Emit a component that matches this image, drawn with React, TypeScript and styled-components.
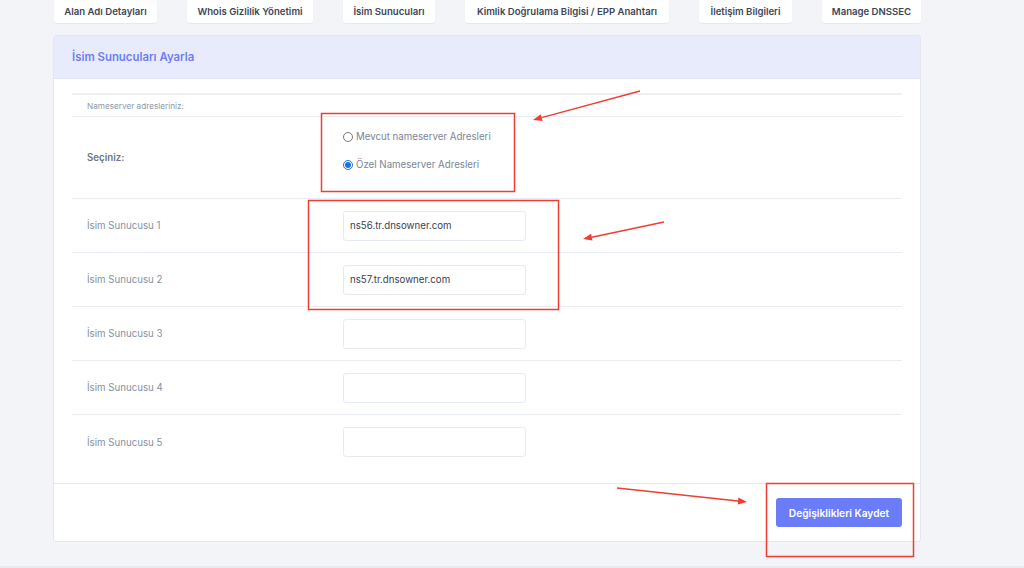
import React from "react";
import styled, { createGlobalStyle } from "styled-components";

const Global = createGlobalStyle`
  html, body { margin: 0; padding: 0; background: #f3f4f8; }
  body { font-family: Inter, "Noto Sans", sans-serif; width: 1024px; height: 568px; overflow: hidden; }
  * { box-sizing: border-box; }
`;

const Page = styled.div`
  position: relative;
  width: 1024px;
  height: 568px;
  padding-left: 53px;
  border-bottom: 2px solid #e8eaf0;
`;

const Tabs = styled.div`
  display: flex;
  gap: 30px;
  padding-left: 1px;
  height: 23px;
`;

const Tab = styled.div<{ $w: number }>`
  width: ${(p) => p.$w}px;
  height: 23px;
  background: #fff;
  border-radius: 0 0 3px 3px;
  box-shadow: 0 1px 1px rgba(40, 50, 80, 0.06);
  display: flex;
  align-items: center;
  justify-content: center;
  font-size: 9.6px;
  font-weight: 600;
  color: #3d4657;
  white-space: nowrap;
`;

const Card = styled.div`
  margin-top: 12px;
  width: 868px;
  height: 507px;
  background: #fff;
  border: 1px solid #e4e7ef;
  border-radius: 3px;
  display: flex;
  flex-direction: column;
`;

const CardHeader = styled.div`
  height: 43px;
  background: #e8ebfc;
  border-bottom: 1px solid #dfe3f5;
  display: flex;
  align-items: center;
  padding-left: 18px;
  font-size: 11.4px;
  font-weight: 600;
  color: #6d7ef5;
`;

const CardBody = styled.div`
  padding: 14px 18px 14px;
  border-bottom: 1px solid #e6e9ef;
`;

const Table = styled.div`
  border-top: 2px solid #eef0f4;
`;

const Caption = styled.div`
  height: 22px;
  display: flex;
  align-items: center;
  padding-left: 15px;
  font-size: 8.2px;
  color: #8c97a8;
  border-bottom: 1px solid #e9ecf2;
`;

const Row = styled.div<{ $h: number; $last?: boolean }>`
  display: grid;
  grid-template-columns: 271px 1fr;
  height: ${(p) => p.$h}px;
  align-items: center;
  border-bottom: ${(p) => (p.$last ? "none" : "1px solid #e9ecf2")};
`;

const Label = styled.div<{ $strong?: boolean }>`
  padding-left: 15px;
  font-size: 9.7px;
  font-weight: ${(p) => (p.$strong ? 600 : 400)};
  color: ${(p) => (p.$strong ? "#6b7687" : "#8590a3")};
`;

const Radios = styled.div`
  display: flex;
  flex-direction: column;
  gap: 17px;
  padding-bottom: 14px;
`;

const RadioLine = styled.label`
  display: flex;
  align-items: center;
  gap: 3px;
  font-size: 9.7px;
  color: #7a8597;
  input {
    margin: 0;
    width: 10px;
    height: 10px;
    accent-color: #1a73e8;
  }
`;

const Input = styled.input`
  width: 183px;
  height: 30px;
  border: 1px solid #e7eaf1;
  border-radius: 3px;
  padding: 0 6px;
  font-family: Inter, "Noto Sans", sans-serif;
  font-size: 9.7px;
  color: #3a4150;
  outline: none;
  background: #fff;
`;

const Footer = styled.div`
  flex: 1;
  display: flex;
  justify-content: flex-end;
  align-items: flex-start;
  padding: 14px 18px 0 0;
`;

const SaveButton = styled.button`
  width: 126px;
  height: 29px;
  border: none;
  border-radius: 3px;
  background: #6b7cf8;
  color: #fff;
  font-family: Inter, "Noto Sans", sans-serif;
  font-size: 10.2px;
  font-weight: 600;
`;

const Overlay = styled.svg`
  position: absolute;
  left: 0;
  top: 0;
  pointer-events: none;
`;

const tabs: [string, number][] = [
  ["Alan Adı Detayları", 103],
  ["Whois Gizlilik Yönetimi", 126],
  ["İsim Sunucuları", 92],
  ["Kimlik Doğrulama Bilgisi / EPP Anahtarı", 204],
  ["İletişim Bilgileri", 93],
  ["Manage DNSSEC", 99],
];

const ns = ["ns56.tr.dnsowner.com", "ns57.tr.dnsowner.com", "", "", ""];

const RED = "#ef3d35";

const Arrow = ({ x1, y1, x2, y2 }: { x1: number; y1: number; x2: number; y2: number }) => {
  const a = Math.atan2(y2 - y1, x2 - x1);
  const L = 9;
  const W = 3.5;
  const bx = x2 - L * Math.cos(a);
  const by = y2 - L * Math.sin(a);
  const px = -Math.sin(a) * W;
  const py = Math.cos(a) * W;
  return (
    <g>
      <line x1={x1} y1={y1} x2={bx} y2={by} stroke={RED} strokeWidth={1.5} />
      <polygon points={`${x2},${y2} ${bx + px},${by + py} ${bx - px},${by - py}`} fill={RED} />
    </g>
  );
};

export default function App() {
  return (
    <>
      <Global />
      <Page>
        <Tabs>
          {tabs.map(([t, w]) => (
            <Tab key={t} $w={w}>
              {t}
            </Tab>
          ))}
        </Tabs>
        <Card>
          <CardHeader>İsim Sunucuları Ayarla</CardHeader>
          <CardBody>
            <Table>
              <Caption>Nameserver adresleriniz:</Caption>
              <Row $h={82}>
                <Label $strong>Seçiniz:</Label>
                <Radios>
                  <RadioLine>
                    <input type="radio" name="ns" readOnly />
                    Mevcut nameserver Adresleri
                  </RadioLine>
                  <RadioLine>
                    <input type="radio" name="ns" defaultChecked />
                    Özel Nameserver Adresleri
                  </RadioLine>
                </Radios>
              </Row>
              {ns.map((v, i) => (
                <Row key={i} $h={54} $last={i === ns.length - 1}>
                  <Label>İsim Sunucusu {i + 1}</Label>
                  <div>
                    <Input defaultValue={v} />
                  </div>
                </Row>
              ))}
            </Table>
          </CardBody>
          <Footer>
            <SaveButton>Değişiklikleri Kaydet</SaveButton>
          </Footer>
        </Card>
        <Overlay width={1024} height={568} viewBox="0 0 1024 568">
          <rect x={321.5} y={113.5} width={193} height={78} fill="none" stroke={RED} strokeWidth={1.5} />
          <rect x={308.5} y={200.5} width={250} height={109} fill="none" stroke={RED} strokeWidth={1.5} />
          <rect x={766.5} y={483.5} width={147} height={73} fill="none" stroke={RED} strokeWidth={1.5} />
          <Arrow x1={640} y1={91} x2={533} y2={120} />
          <Arrow x1={664} y1={222} x2={583} y2={239} />
          <Arrow x1={617} y1={488} x2={747} y2={502} />
        </Overlay>
      </Page>
    </>
  );
}
